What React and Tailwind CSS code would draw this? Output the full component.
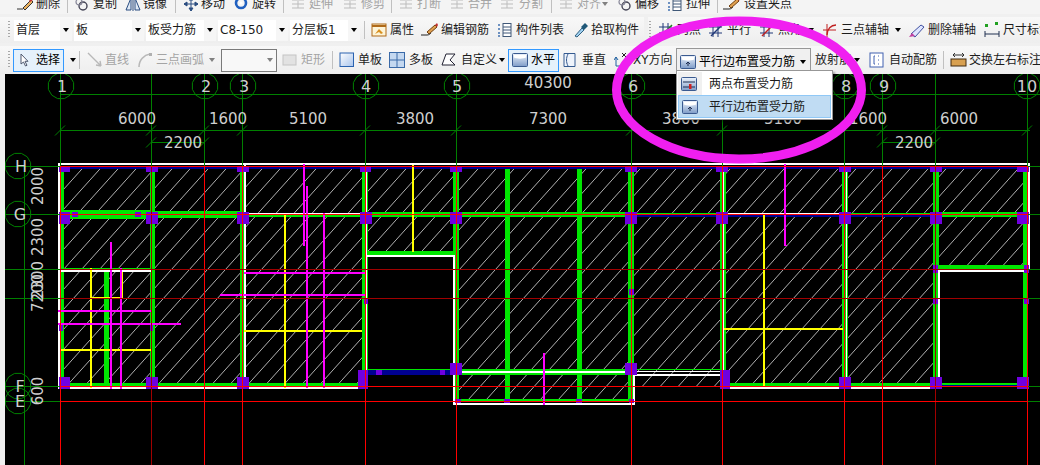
import React from 'react';

const GREEN = '#00e600';
const PURPLE = '#7000e0';
const GRID_GREEN = '#008000';

// cad drawing data: [x, y, w, h]
const hatchAreas = [
  [60, 168, 305, 218],
  [365, 168, 91, 84],
  [456, 168, 479, 203],
  [456, 371, 178, 31],
  [631, 371, 304, 15],
  [935, 168, 92, 97],
];
const greenBars = [
  [61, 166, 3, 220], [150, 166, 5, 220], [240, 166, 6, 220],
  [362, 166, 6, 204], [453, 166, 6, 238], [505, 168, 5, 233], [577, 168, 5, 233],
  [628, 166, 6, 235], [720, 166, 6, 220], [842, 166, 6, 220],
  [933, 166, 6, 220], [1023, 166, 5, 220],
  [60, 210, 91, 9], [151, 211, 91, 7], [242, 213, 123, 4], [365, 212, 266, 5], [935, 212, 92, 5],
  [60, 383, 305, 3], [456, 369, 178, 6], [456, 399, 178, 3], [726, 383, 209, 3], [939, 383, 88, 3],
  [366, 251, 88, 4], [938, 265, 87, 5], [60, 268, 91, 1], [104, 272, 5, 111], [631, 213, 304, 1], [365, 369, 91, 1], [631, 369, 90, 1],
];
const blueBars = [[60, 166, 968, 3], [365, 370, 91, 5], [631, 214, 304, 3], [939, 385, 88, 2]];
const whiteBars = [
  [58, 163, 971, 2], [58, 163, 2, 226], [58, 387, 306, 2], [722, 387, 216, 2], [365, 255, 89, 2], [60, 270, 91, 2],
  [453, 255, 2, 150], [455, 403, 180, 2], [633, 375, 2, 30], [457, 371, 175, 2], [634, 371, 87, 1], [634, 374, 88, 2],
  [244, 213, 121, 1], [244, 165, 2, 220], [365, 166, 2, 204], [722, 213, 122, 1], [723, 166, 1, 220], [846, 166, 1, 220],
  [938, 270, 2, 118], [938, 270, 89, 2], [1028, 163, 2, 107], [456, 166, 1, 204], [631, 166, 1, 235],
];
const yellowBars = [
  [90, 268, 2, 120], [122, 272, 1, 26], [91, 297, 31, 1], [60, 349, 91, 2], [284, 215, 2, 173], [244, 330, 118, 2],
  [412, 165, 2, 87], [763, 215, 2, 171], [724, 328, 119, 2],
];
const magentaBars = [
  [110, 242, 2, 147], [120, 268, 2, 121], [58, 310, 94, 2], [58, 323, 123, 2], [303, 164, 2, 82], [306, 186, 2, 202],
  [323, 213, 2, 175], [244, 272, 121, 2], [220, 294, 145, 2], [543, 353, 2, 52], [784, 164, 2, 82], [784, 245, 3, 1],
];
const purpleBars = [
  [59, 166, 11, 6], [146, 166, 12, 6], [237, 166, 12, 6], [360, 166, 11, 6], [450, 166, 12, 6], [625, 166, 12, 6],
  [716, 166, 12, 6], [839, 166, 12, 6], [930, 166, 12, 6], [1017, 166, 12, 6],
  [59, 212, 11, 12], [146, 212, 12, 12], [237, 212, 12, 12], [360, 212, 12, 12], [450, 212, 12, 12], [625, 212, 12, 12],
  [716, 212, 12, 12], [839, 212, 12, 12], [930, 212, 12, 12], [1017, 212, 12, 12], [72, 212, 6, 5], [135, 212, 6, 5],
  [59, 377, 11, 12], [146, 377, 12, 12], [237, 377, 12, 12], [358, 370, 10, 19], [450, 363, 12, 12], [625, 363, 12, 12],
  [720, 370, 10, 19], [839, 377, 12, 12], [930, 377, 12, 12], [1017, 377, 12, 12],
  [376, 370, 6, 5], [440, 370, 5, 5], [455, 399, 6, 4], [504, 399, 6, 4], [576, 399, 6, 4], [629, 399, 5, 4], [629, 289, 5, 6],
  [933, 265, 5, 8], [1024, 265, 5, 8], [933, 299, 5, 5], [1024, 299, 5, 5], [59, 325, 4, 6], [150, 325, 3, 6], [364, 299, 4, 5],
];
const columns = [
  { x: 60 }, { x: 151, dark: true }, { x: 204 }, { x: 242 }, { x: 365 }, { x: 456 }, { x: 631 }, { x: 722 },
  { x: 844 }, { x: 882 }, { x: 935, dark: true }, { x: 1027 },
];
const rowLines = [
  { y: 166, c: '#ff0000' }, { y: 214, c: '#ff0000' }, { y: 269, c: '#a00000' },
  { y: 298, c: '#a00000' }, { y: 386, c: '#ff0000' }, { y: 401, c: '#ff0000' },
];
const dims = [
  ['6000', 137, 124], ['1600', 228, 124], ['5100', 308, 124], ['3800', 415, 124], ['7300', 548, 124], ['3800', 681, 124],
  ['5100', 783, 124], ['1600', 868, 124], ['6000', 959, 124], ['2200', 183, 148], ['2200', 914, 148], ['40300', 548, 88],
];
const sideDims = [['2000', 186], ['2300', 237], ['2300', 280], ['7200', 293], ['600', 391]];
// label, polygon centre x, centre y, label x
const axisLabels = [
  ['1', 61, 86, 62], ['2', 205, 86, 206], ['3', 243, 86, 244], ['4', 366, 86, 366], ['5', 457, 86, 457], ['6', 632, 86, 633],
  ['8', 845, 86, 846], ['9', 883, 86, 884], ['10', 1027, 86, 1027], ['H', 18, 166, 21], ['G', 18, 214, 20], ['F', 18, 386, 20], ['E', 18, 401, 20],
];

const polygonPoints = (cx, cy, r) =>
  Array.from({ length: 12 }, (_, i) => {
    const a = (i * Math.PI) / 6 + Math.PI / 12;
    return `${(cx + r * Math.cos(a)).toFixed(1)},${(cy + r * Math.sin(a)).toFixed(1)}`;
  }).join(' ');

const Bars = ({ items, fill }) =>
  items.map(([x, y, w, h], i) => <rect key={i} x={x} y={y} width={w} height={h} fill={fill} shapeRendering="crispEdges" />);

const CadCanvas = () => (
  <svg className="block flex-1 h-[391px] bg-black" viewBox="5 74 1035 391">
    <defs>
      <pattern id="hatch" width="18" height="20" patternUnits="userSpaceOnUse">
        <line x1="0" y1="20" x2="18" y2="0" stroke="#c4c4c4" strokeWidth="0.9" />
      </pattern>
    </defs>
    {hatchAreas.map(([x, y, w, h], i) => (
      <rect key={i} x={x} y={y} width={w} height={h} fill="url(#hatch)" />
    ))}
    <Bars items={greenBars} fill={GREEN} />
    <Bars items={blueBars} fill="#000090" />
    <Bars items={whiteBars} fill="#ffffff" />
    <Bars items={yellowBars} fill="#ffff00" />
    <Bars items={magentaBars} fill="#ff00ff" />
    <Bars items={purpleBars} fill={PURPLE} />

    <g stroke={GRID_GREEN} strokeWidth="1" shapeRendering="crispEdges">
      {columns.map((c) => (
        <line key={c.x} x1={c.x + 0.5} y1="74" x2={c.x + 0.5} y2="166" />
      ))}
      <line x1="60" y1="94.5" x2="1040" y2="94.5" />
      <line x1="60" y1="130.5" x2="1030" y2="130.5" />
      <line x1="151" y1="142.5" x2="204" y2="142.5" />
      <line x1="882" y1="142.5" x2="935" y2="142.5" />
      <line x1="24.5" y1="166" x2="24.5" y2="465" />
      {rowLines.map((r) => (
        <g key={r.y}>
          <line x1="5" y1={r.y + 0.5} x2="60" y2={r.y + 0.5} />
          <line x1="1028" y1={r.y + 0.5} x2="1040" y2={r.y + 0.5} />
        </g>
      ))}
    </g>
    <g stroke={GRID_GREEN} strokeWidth="1">
      {[60, 151, 204, 242, 365, 456, 631, 722, 844, 882, 935, 1027].map((x) => (
        <line key={x} x1={x - 5} y1="135.5" x2={x + 5} y2="125.5" />
      ))}
      {[151, 204, 882, 935].map((x) => (
        <line key={x} x1={x - 5} y1="147.5" x2={x + 5} y2="137.5" />
      ))}
    </g>
    <g strokeWidth="1" shapeRendering="crispEdges">
      {columns.map((c) => (
        <line key={c.x} x1={c.x + 0.5} y1="166" x2={c.x + 0.5} y2="465" stroke={c.dark ? '#a00000' : '#ff0000'} />
      ))}
      {rowLines.map((r) => (
        <line key={r.y} x1="60" y1={r.y + 0.5} x2="1028" y2={r.y + 0.5} stroke={r.c} />
      ))}
    </g>

    {axisLabels.map(([t, x, y]) => (
      <polygon key={t} points={polygonPoints(x, y, 13)} fill="none" stroke={GRID_GREEN} strokeWidth="1" />
    ))}
    <g fill="#cfcfcf" fontFamily="'DejaVu Sans', sans-serif" fontSize="15">
      {dims.map(([t, x, y], i) => (
        <text key={i} x={x} y={y} textAnchor="middle">{t}</text>
      ))}
      {sideDims.map(([t, y], i) => (
        <text key={i} x="0" y="0" textAnchor="middle" transform={`translate(43 ${y}) rotate(-90)`}>{t}</text>
      ))}
      {axisLabels.map(([t, , y, lx]) => (
        <text key={t} x={lx} y={y + 6} textAnchor="middle" fontSize="16">{t}</text>
      ))}
    </g>
  </svg>
);

// toolbar icons
const Svg = ({ children, w = 16 }) => (
  <svg width={w} height="16" viewBox={`0 0 ${w} 16`} className="block shrink-0">{children}</svg>
);
const PenIcon = () => (
  <Svg w={18}>
    <path d="M1 13h6M7 12l8-8 2 2-8 8z" stroke="#333" fill="#e8b060" strokeWidth="1" />
    <path d="M13 5l2-3 2 2-3 2z" fill="#c03030" />
  </Svg>
);
const CopyIcon = () => (
  <Svg>
    <circle cx="10" cy="10" r="4" fill="none" stroke="#445" strokeWidth="1.4" />
    <circle cx="6" cy="6" r="3" fill="none" stroke="#889" strokeWidth="1.2" />
  </Svg>
);
const MirrorIcon = () => (
  <Svg>
    <path d="M1 14L6 2v12zM15 14L10 2v12z" fill="#dfe9f5" stroke="#2a4d80" />
    <path d="M8 1v14" stroke="#2a4d80" />
  </Svg>
);
const MoveIcon = () => (
  <Svg>
    <path d="M8 1v14M1 8h14M8 1L6 4h4zM8 15l-2-3h4zM1 8l3-2v4zM15 8l-3-2v4z" stroke="#2a4d80" fill="#2a4d80" />
  </Svg>
);
const RotateIcon = () => (
  <Svg>
    <circle cx="8" cy="7" r="5" fill="none" stroke="#2060c0" strokeWidth="2.6" />
    <circle cx="8" cy="7" r="1.6" fill="#fff" />
  </Svg>
);
const GhostIcon = () => (
  <Svg>
    <path d="M2 4h5M9 4h5M2 8h12M8 2v10M2 12h12" stroke="#bcbcbc" fill="none" />
  </Svg>
);
const PropsIcon = () => (
  <Svg>
    <rect x="1" y="2" width="14" height="12" fill="#fdf4d8" stroke="#b06a18" />
    <path d="M1 4h14" stroke="#b06a18" strokeWidth="2" />
    <path d="M4 12l4-5 4 4-2 1-2-2z" fill="#d89020" />
  </Svg>
);
const EditIcon = () => (
  <Svg w={18}>
    <path d="M0 13h6c2 0 3-1 4-2" stroke="#222" fill="none" />
    <path d="M6 10l8-7 2 2-8 7z" fill="#e0a050" stroke="#704010" />
    <path d="M14 3l2-2 1 2-1 2z" fill="#c03030" />
  </Svg>
);
const ListIcon = () => (
  <Svg>
    <path d="M1 3h2M1 7h2M1 11h2M1 14h2" stroke="#4070b0" strokeWidth="1.6" />
    <rect x="6" y="1.500" width="8" height="13" fill="#fff" stroke="#405878" />
    <path d="M6 5h8M6 8h8M6 11h8" stroke="#405878" />
  </Svg>
);
const PickIcon = () => (
  <Svg>
    <path d="M2 14l7-8 2 2-7 7z" fill="#a0d0f0" stroke="#306080" />
    <path d="M8 5l4-4 3 3-4 4z" fill="#205878" />
  </Svg>
);
const AxisIcon = ({ accent = '#c02020' }) => (
  <Svg>
    <path d="M1 5h13M1 11h13M5 1v14M10 1v14" stroke="#203878" fill="none" />
    <path d="M3 14L14 3" stroke={accent} strokeWidth="1.4" />
  </Svg>
);
const ArcAxisIcon = () => (
  <Svg>
    <path d="M1 8h13M5 2v13" stroke="#c02020" />
    <path d="M5 13C5 7 9 3 14 3" stroke="#c02020" fill="none" strokeWidth="1.3" />
  </Svg>
);
const EraseIcon = () => (
  <Svg w={18}>
    <path d="M3 12L13 3l3 2-9 10z" fill="#dfe6ff" stroke="#4050a0" />
    <path d="M1 15l3-4 3 3z" fill="#c040a0" />
  </Svg>
);
const DimIcon = () => (
  <Svg>
    <rect x="1" y="2" width="3" height="3" fill="#20a020" />
    <rect x="11" y="0" width="3" height="3" fill="#20a020" />
    <path d="M1 12h14M1 9v6M15 9v6" stroke="#203050" fill="none" />
  </Svg>
);
const CursorIcon = () => (
  <svg width="9" height="14" viewBox="0 0 9 14" className="block">
    <path d="M1 1v10l2.500-2 2 4 1.500-.7-2-4h3z" fill="#fff" stroke="#505a70" />
  </svg>
);
const LineIcon = () => (
  <Svg>
    <path d="M1 1l13 13M14 14l-5-1M14 14l-1-5" stroke="#b8b8b8" fill="none" strokeWidth="1.4" />
  </Svg>
);
const ArcIcon = () => (
  <Svg>
    <path d="M2 15C2 8 7 3 13 2" stroke="#b8b8b8" fill="none" strokeWidth="1.6" />
    <rect x="12" y="1" width="3" height="3" fill="#b0b0b0" />
  </Svg>
);
const RectIcon = () => (
  <Svg>
    <rect x="1" y="3" width="13" height="10" fill="#e2e2e2" stroke="#c4c4c4" />
  </Svg>
);
const SlabIcon = () => (
  <Svg>
    <defs>
      <linearGradient id="slabFill" x1="0" y1="0" x2="1" y2="1">
        <stop offset="0" stopColor="#fff" />
        <stop offset="1" stopColor="#a8c4ec" />
      </linearGradient>
    </defs>
    <rect x="1" y="1" width="13.500" height="13.500" fill="url(#slabFill)" stroke="#2a62b0" />
  </Svg>
);
const MultiSlabIcon = () => (
  <Svg>
    <rect x="0.500" y="0.500" width="15" height="15" fill="#c4d8f0" stroke="#3a6aa8" />
    <path d="M8 1v14M1 8h14" stroke="#3a6aa8" />
  </Svg>
);
const CustomIcon = () => (
  <Svg>
    <path d="M1 13L5 2h9l-5 6 5 5z" fill="#fff" stroke="#223" />
  </Svg>
);
const BarGradient = () => (
  <defs>
    <linearGradient id="barFill" x1="0" y1="0" x2="0" y2="1">
      <stop offset="0" stopColor="#eef4fc" />
      <stop offset="1" stopColor="#7e9cc8" />
    </linearGradient>
  </defs>
);
// horizontal bar layout icon, with a small up arrow for the parallel-edge command
const BarIcon = ({ arrow }) => (
  <Svg>
    <BarGradient />
    <rect x="0.500" y="1.500" width="15" height="13" rx="1" fill="url(#barFill)" stroke="#3a5a90" />
    <path d="M2 3h12v2.500c-3 1.500-9 1.500-12 0z" fill="#fff" />
    {arrow && <path d="M8 12V8M6 10l2-2 2 2" stroke="#1c2c50" fill="none" />}
  </Svg>
);
const VerticalIcon = () => (
  <Svg w={13}>
    <path d="M1 1.500h11v13H1z" fill="#eef3fb" stroke="#345a90" />
    <path d="M5 2c-2 4-2 8 0 12" stroke="#345a90" fill="none" />
  </Svg>
);
const XyIcon = () => (
  <Svg w={13}>
    <path d="M2 14V5M2 14h6M2 5L0 8M2 5l2 3" stroke="#2060a0" fill="none" />
    <path d="M8 1l4 4M12 1L8 5" stroke="#222" />
  </Svg>
);
const AutoIcon = () => (
  <Svg>
    <rect x="1" y="1" width="13" height="14" fill="#fff" stroke="#4060b0" />
    <path d="M6 4H5v8h1M10 4h-1M9 8h1M10 12H9" stroke="#4060b0" fill="none" />
  </Svg>
);
const SwapIcon = () => (
  <Svg w={17}>
    <rect x="1" y="7" width="15" height="7" fill="#d8a050" stroke="#402a10" />
    <path d="M3 3h11M5 1L3 3l2 2M12 1l2 2-2 2" stroke="#303030" fill="none" />
  </Svg>
);
const TwoPointIcon = () => (
  <Svg>
    <BarGradient />
    <rect x="0.500" y="1.500" width="15" height="13" rx="1" fill="url(#barFill)" stroke="#3a5a90" />
    <path d="M2 6h12M2 11h12" stroke="#1c2c50" />
    <rect x="8" y="8" width="2.500" height="5" fill="#d02020" />
  </Svg>
);

const Arrow = ({ className = 'text-black' }) => (
  <span className={`inline-block w-0 h-0 border-x-[3.500px] border-x-transparent border-t-[4px] border-t-current ${className}`} />
);
const Sep = ({ className = '' }) => <div className={`w-px h-[18px] bg-[#c0c0c0] shrink-0 ${className}`} />;
const Grip = ({ className = '' }) => (
  <div className={`w-[2px] h-[18px] shrink-0 bg-[repeating-linear-gradient(to_bottom,#a8a8a8_0,#a8a8a8_1px,transparent_1px,transparent_3px)] ${className}`} />
);

const Tool = ({ w, slot, icon, disabled, children, arrow }) => (
  <div className={`flex items-center shrink-0 whitespace-nowrap ${w} ${disabled ? 'text-[#a4a4a4]' : 'text-[#1c1c1c]'}`}>
    <div className={`shrink-0 ${slot}`}>{icon}</div>
    <span>{children}</span>
    {arrow && <span className={`flex items-center ${arrow}`}><Arrow className={disabled ? 'text-[#808080]' : 'text-black'} /></span>}
  </div>
);

const Combo = ({ label, className }) => (
  <div className={`flex items-center h-[21px] shrink-0 bg-white ${className}`}>
    <span className="flex-1 pl-[2px] whitespace-nowrap text-[#1c1c1c]">{label}</span>
    <span className="w-[12px] h-full flex items-center justify-center bg-[#f6f6f6]"><Arrow /></span>
  </div>
);

export default function App() {
  return (
    <div
      className="relative w-[1040px] h-[465px] overflow-hidden bg-[#f0f0f0] text-[12px] leading-4"
      style={{ fontFamily: "'DejaVu Sans', 'Noto Sans CJK SC', sans-serif" }}
    >
      {/* top row, cut off by the window */}
      <div className="h-[14px] overflow-hidden bg-[#f4f4f4] pl-[16px]">
        <div className="flex items-center -mt-[4px] h-[16px]">
          <Tool w="w-[51px]" slot="w-[20px]" icon={<PenIcon />}>删除</Tool>
          <Sep className="mr-[5px]" />
          <Tool w="w-[52px]" slot="w-[20px]" icon={<CopyIcon />}>复制</Tool>
          <Tool w="w-[50px]" slot="w-[18px]" icon={<MirrorIcon />}>镜像</Tool>
          <Sep className="mr-[7px]" />
          <Tool w="w-[50px]" slot="w-[18px]" icon={<MoveIcon />}>移动</Tool>
          <Tool w="w-[50px]" slot="w-[19px]" icon={<RotateIcon />}>旋转</Tool>
          <Sep className="mr-[6px]" />
          <Tool w="w-[52px]" slot="w-[19px]" icon={<GhostIcon />} disabled>延伸</Tool>
          <Tool w="w-[49px]" slot="w-[19px]" icon={<GhostIcon />} disabled>修剪</Tool>
          <Sep className="mr-[6px]" />
          <Tool w="w-[51px]" slot="w-[19px]" icon={<GhostIcon />} disabled>打断</Tool>
          <Tool w="w-[50px]" slot="w-[19px]" icon={<GhostIcon />} disabled>合并</Tool>
          <Tool w="w-[52px]" slot="w-[20px]" icon={<GhostIcon />} disabled>分割</Tool>
          <Sep className="mr-[6px]" />
          <Tool w="w-[58px]" slot="w-[19px]" icon={<GhostIcon />} disabled arrow="ml-[1px]">对齐</Tool>
          <Tool w="w-[51px]" slot="w-[19px]" icon={<CopyIcon />}>偏移</Tool>
          <Tool w="w-[50px]" slot="w-[19px]" icon={<ListIcon />}>拉伸</Tool>
          <Sep className="mr-[5px]" />
          <Tool w="w-[70px]" slot="w-[21px]" icon={<EditIcon />}>设置夹点</Tool>
        </div>
      </div>

      {/* component selector row */}
      <div className="mt-[3px] h-[26px] flex items-center bg-gradient-to-b from-[#f8f8f8] to-[#eeeeee]">
        <Grip className="ml-[8px] mr-[4px]" />
        <Combo label="首层" className="w-[58px] mr-[2px]" />
        <Combo label="板" className="w-[70px] mr-[2px]" />
        <Combo label="板受力筋" className="w-[70px] mr-[2px]" />
        <Combo label="C8-150" className="w-[70px] mr-[2px]" />
        <Combo label="分层板1" className="w-[70px] mr-[4px]" />
        <Sep className="mr-[6px]" />
        <Tool w="w-[50px]" slot="w-[19px]" icon={<PropsIcon />}>属性</Tool>
        <Tool w="w-[76px]" slot="w-[20px]" icon={<EditIcon />}>编辑钢筋</Tool>
        <Tool w="w-[76px]" slot="w-[19px]" icon={<ListIcon />}>构件列表</Tool>
        <Tool w="w-[71px]" slot="w-[18px]" icon={<PickIcon />}>拾取构件</Tool>
        <div className="w-[4px] h-full bg-[#f0f0f0] shrink-0" />
        <Grip className="ml-[1px] mr-[7px]" />
        <Tool w="w-[50px]" slot="w-[19px]" icon={<AxisIcon accent="#208020" />}>两点</Tool>
        <Tool w="w-[51px]" slot="w-[19px]" icon={<AxisIcon accent="#203878" />}>平行</Tool>
        <Tool w="w-[63px]" slot="w-[19px]" icon={<AxisIcon />} arrow="ml-[6px]">点角</Tool>
        <Tool w="w-[86px]" slot="w-[19px]" icon={<ArcAxisIcon />} arrow="ml-[6px]">三点辅轴</Tool>
        <Tool w="w-[76px]" slot="w-[20px]" icon={<EraseIcon />}>删除辅轴</Tool>
        <Tool w="w-[56px]" slot="w-[19px]" icon={<DimIcon />}>尺寸标注</Tool>
      </div>

      {/* draw mode row */}
      <div className="mt-[3px] h-[28px] flex items-center bg-gradient-to-b from-[#f8f8f8] to-[#eeeeee]">
        <Grip className="ml-[8px] mr-[3px]" />
        <div className="flex items-center shrink-0 w-[51px] h-[23px] border border-[#3399ff] bg-[#e5f1fb] whitespace-nowrap">
          <div className="w-[22px] pl-[6px]"><CursorIcon /></div>
          <span>选择</span>
        </div>
        <span className="ml-[2px] w-[13px] flex items-center justify-center shrink-0"><Arrow /></span>
        <Sep className="mr-[7px]" />
        <Tool w="w-[50px]" slot="w-[18px]" icon={<LineIcon />} disabled>直线</Tool>
        <Tool w="w-[84px]" slot="w-[19px]" icon={<ArcIcon />} disabled arrow="ml-[5px]">三点画弧</Tool>
        <div className="w-[56px] h-[23px] shrink-0 border border-[#7a7a7a] bg-[#f8f8f8] flex items-center justify-end pr-[3px]"><Arrow className="text-[#808080]" /></div>
        <div className="w-[5px] shrink-0" />
        <Tool w="w-[50px]" slot="w-[19px]" icon={<RectIcon />} disabled>矩形</Tool>
        <Sep className="mr-[6px]" />
        <Tool w="w-[50px]" slot="w-[19px]" icon={<SlabIcon />}>单板</Tool>
        <Tool w="w-[52px]" slot="w-[20px]" icon={<MultiSlabIcon />}>多板</Tool>
        <Tool w="w-[67px]" slot="w-[20px]" icon={<CustomIcon />} arrow="ml-[2px]">自定义</Tool>
        <div className="flex items-center shrink-0 w-[51px] h-[23px] border border-[#3399ff] bg-[#e5f1fb] whitespace-nowrap">
          <div className="w-[22px] pl-[3px]"><BarIcon /></div>
          <span>水平</span>
        </div>
        <div className="w-[4px] shrink-0" />
        <Tool w="w-[51px]" slot="w-[19px]" icon={<VerticalIcon />}>垂直</Tool>
        <Tool w="w-[62px]" slot="w-[19px]" icon={<XyIcon />}>XY方向</Tool>
        <div className="flex items-center shrink-0 self-end w-[135px] h-[26px] border border-b-0 border-[#979797] bg-[#f0f0f0] whitespace-nowrap">
          <div className="w-[22px] pl-[3px]"><BarIcon arrow /></div>
          <span>平行边布置受力筋</span>
          <span className="ml-[5px] flex items-center"><Arrow /></span>
        </div>
        <div className="w-[4px] shrink-0" />
        <Tool w="w-[54px]" slot="w-0" arrow="ml-[3px]">放射筋</Tool>
        <Tool w="w-[74px]" slot="w-[20px]" icon={<AutoIcon />}>自动配筋</Tool>
        <Sep className="mr-[6px]" />
        <Tool w="w-[90px]" slot="w-[19px]" icon={<SwapIcon />}>交换左右标注</Tool>
      </div>

      <div className="flex">
        <div className="w-[5px] shrink-0 bg-[#f0f0f0]" />
        <CadCanvas />
      </div>

      {/* dropdown menu */}
      <div className="absolute left-[676px] top-[70px] w-[157px] h-[50px] border border-[#979797] bg-white p-px shadow-[2px_2px_2px_rgba(0,0,0,0.35)] z-10">
        <div className="flex items-center h-[23px]">
          <div className="w-[24px] h-full bg-[#f0f0f0] pl-[3px] flex items-center shrink-0"><TwoPointIcon /></div>
          <span className="ml-[7px] whitespace-nowrap text-[#1c1c1c]">两点布置受力筋</span>
        </div>
        <div className="flex items-center h-[23px] border border-[#90c8f6] bg-[#c0dcf3]">
          <div className="w-[23px] pl-[3px] shrink-0"><BarIcon arrow /></div>
          <span className="ml-[7px] whitespace-nowrap text-[#1c1c1c]">平行边布置受力筋</span>
        </div>
      </div>

      {/* hand drawn highlight on the screenshot */}
      <svg className="absolute left-0 top-0 z-20 pointer-events-none" width="1040" height="465" viewBox="0 0 1040 465">
        <ellipse cx="739" cy="90" rx="122.500" ry="69" fill="none" stroke="#f01ff0" strokeWidth="9" />
      </svg>
    </div>
  );
}
